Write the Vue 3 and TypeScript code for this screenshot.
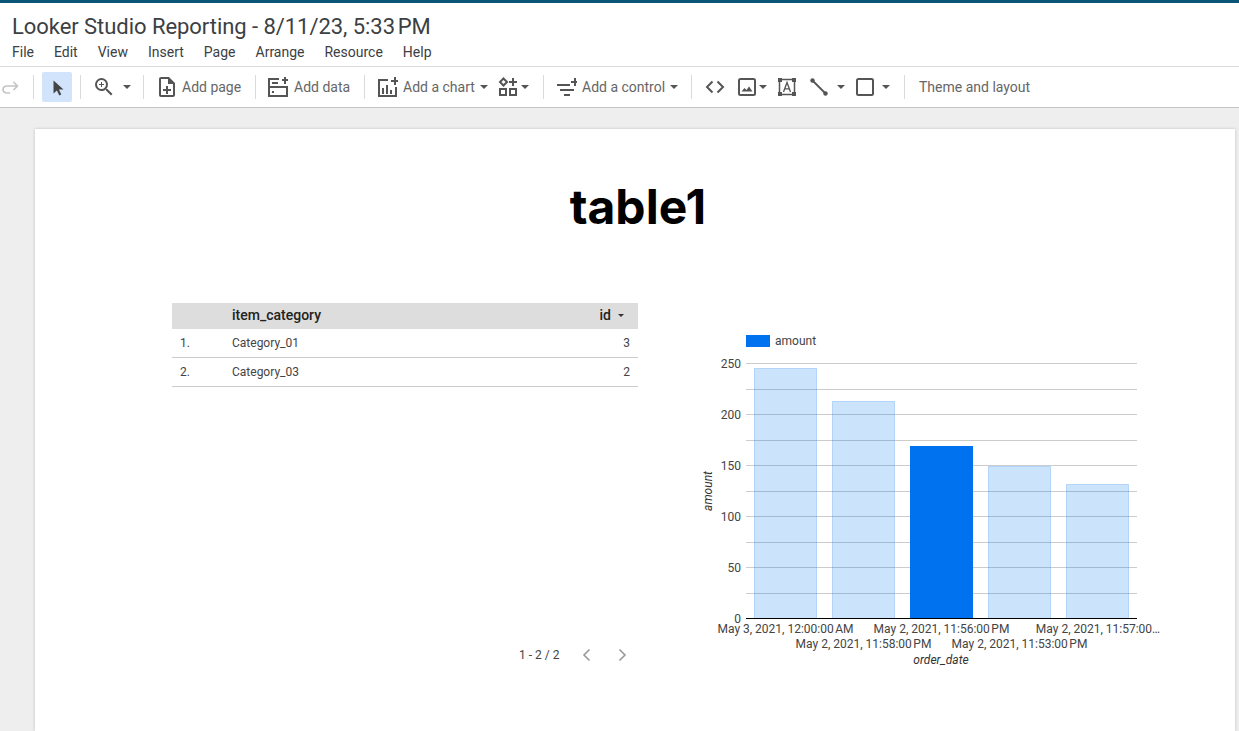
<template>
  <div class="app">
    <div class="accent"></div>
    <header class="head">
      <div class="doc-title">Looker Studio Reporting - 8/11/23, 5:33&#8239;PM</div>
      <nav class="menu">
        <span v-for="m in menus" :key="m" class="menu-item">{{ m }}</span>
      </nav>
    </header>

    <div class="toolbar">
      <div class="group g-redo">
        <svg class="ico redo" viewBox="0 0 18 14" width="18" height="14"><path d="M16 6H6.5C3.8 6 2 7.6 2 9.6S3.8 13 6.5 13H9M12.5 2 16.5 6l-4 4" fill="none" stroke="#c4c4c4" stroke-width="1.7"/></svg>
      </div>
      <div class="group g-select">
        <div class="select-btn">
          <svg viewBox="0 0 24 24" width="24" height="24"><path d="M8.5 5.5v13l3.4-3 2.4 5 2-1-2.4-4.9h4.6z" fill="#444"/></svg>
        </div>
      </div>
      <div class="group g-zoom">
        <svg viewBox="2 2 20 20" width="20" height="20"><path fill="#555" d="M15.5 14h-.79l-.28-.27A6.47 6.47 0 0 0 16 9.5 6.5 6.5 0 1 0 9.5 16c1.61 0 3.09-.59 4.23-1.57l.27.28v.79l5 4.99L20.49 19l-4.99-5zm-6 0C7.01 14 5 11.99 5 9.5S7.01 5 9.5 5 14 7.01 14 9.5 11.99 14 9.5 14zM12 10h-2v2H9v-2H7V9h2V7h1v2h2v1z"/></svg>
        <span class="caret caret-zoom"></span>
      </div>
      <div class="group g-page">
        <svg viewBox="0 0 24 24" width="24" height="24"><path fill="#555" d="M14 2H6c-1.1 0-1.99.9-1.99 2L4 20c0 1.1.89 2 1.99 2H18c1.1 0 2-.9 2-2V8l-6-6zm4 18H6V4h7v5h5v11zM13 11h-2v3H8v2h3v3h2v-3h3v-2h-3z"/></svg>
        <span class="label">Add page</span>
      </div>
      <div class="group g-data">
        <svg viewBox="0 0 20 20" width="20" height="20"><path fill="none" stroke="#555" stroke-width="2" d="M11 2H1v17h18V10H1"/><path fill="#555" d="M4 5h6v2H4zM4 14h2v2H4zM14 2h2V0h2v2h2v2h-2v3h-2V4h-2z"/></svg>
        <span class="label">Add data</span>
      </div>
      <div class="group g-chart">
        <svg viewBox="0 0 20 20" width="20" height="20"><path fill="none" stroke="#555" stroke-width="2" d="M10 3H1v16h17V10"/><path fill="#555" d="M4 11h2v6H4zM8 8h2v9H8zM12 13h2v4h-2zM13 3h3V0h2v3h2v2h-2v3h-2V5h-3z"/></svg>
        <span class="label">Add a chart</span>
        <span class="caret caret-chart"></span>
        <svg class="comm" viewBox="0 0 20 20" width="20" height="20"><path fill="none" stroke="#555" stroke-width="2" d="M5.500 1.500 9 5 5.500 8.500 2 5zM2 12h6v6H2zM12 12h6v6h-6z"/><path fill="#555" d="M14 1h2v3h3v2h-3v3h-2V6h-3V4h3z"/></svg>
        <span class="caret caret-comm"></span>
      </div>
      <div class="group g-control">
        <svg viewBox="0 0 20 18" width="20" height="18"><path fill="#555" d="M0 6h13v2H0zM3 11h14v2H3zM7 16h6v2H7zM14 3h3V0h2v3h1v2h-1v3h-2V5h-3z"/></svg>
        <span class="label">Add a control</span>
        <span class="caret caret-control"></span>
      </div>
      <div class="group g-insert">
        <svg class="code" viewBox="0 0 20 14" width="20" height="14"><path d="M7.500 1.500 2 7l5.500 5.500M12.500 1.500 18 7l-5.500 5.500" fill="none" stroke="#555" stroke-width="2"/></svg>
        <svg class="image" viewBox="0 0 18 18" width="18" height="18"><rect x="1" y="1" width="16" height="16" rx="1.500" fill="none" stroke="#555" stroke-width="2"/><path fill="#555" d="M3.500 13.500 6.500 10l2 2 2.500-3.500 3.500 5z"/></svg>
        <span class="caret caret-image"></span>
        <svg class="frame" viewBox="0 0 18 18" width="18" height="18"><path fill="none" stroke="#555" stroke-width="1.500" d="M2 1.500h14M2 16.500h14M1.500 2v14M16.500 2v14"/><path fill="#555" d="M0 0h4v4H0zM14 0h4v4h-4zM0 14h4v4H0zM14 14h4v4h-4z"/><path fill="none" stroke="#555" stroke-width="1.300" d="M5.500 14 9 4.500 12.500 14M6.800 10.800h4.400"/></svg>
        <svg class="line" viewBox="0 0 18 18" width="18" height="18"><path stroke="#555" stroke-width="1.800" d="M3 3l12 12"/><circle cx="2.500" cy="2.500" r="2.200" fill="#555"/><circle cx="15.500" cy="15.500" r="2.200" fill="#555"/></svg>
        <span class="caret caret-line"></span>
        <svg class="rect" viewBox="0 0 18 18" width="18" height="18"><rect x="1" y="1" width="16" height="16" rx="1.500" fill="none" stroke="#555" stroke-width="2"/></svg>
        <span class="caret caret-rect"></span>
      </div>
      <div class="group g-theme">
        <span class="label">Theme and layout</span>
      </div>
    </div>

    <main class="canvas">
      <section class="page">
        <h1 class="page-title">table1</h1>
        <div class="widgets">
          <div class="table-widget">
            <div class="t-row t-head">
              <span class="c-num"></span>
              <span class="c-name">item_category</span>
              <span class="c-val">id<i class="sort"></i></span>
            </div>
            <div v-for="(row, i) in rows" :key="row.name" class="t-row">
              <span class="c-num">{{ i + 1 }}.</span>
              <span class="c-name">{{ row.name }}</span>
              <span class="c-val">{{ row.id }}</span>
            </div>
            <div class="pager">
              <span>1 - 2 / 2</span>
              <svg viewBox="0 0 10 14" width="10" height="14"><path d="M8.500 1.500 3 7l5.500 5.500" fill="none" stroke="#999" stroke-width="1.600"/></svg>
              <svg viewBox="0 0 10 14" width="10" height="14"><path d="M1.500 1.500 7 7l-5.500 5.500" fill="none" stroke="#999" stroke-width="1.600"/></svg>
            </div>
          </div>

          <svg class="chart" viewBox="700 325 470 360" width="470" height="360">
            <rect x="746" y="335" width="24" height="12" fill="#0072f0"/>
            <text x="775" y="345" class="tick">amount</text>
            <line v-for="g in grid" :key="g.y" x1="746" x2="1137" :y1="g.y" :y2="g.y" stroke="#ccc"/>
            <text v-for="g in grid.filter(t => t.label)" :key="g.label" x="741" :y="g.y + 4" text-anchor="end" class="tick">{{ g.label }}</text>
            <template v-for="(b, i) in bars" :key="b.x">
              <rect
                :x="b.x + 0.5"
                :y="b.top + 0.5"
                width="62"
                :height="618 - b.top"
                :fill="i === 2 ? '#0072f0' : 'rgba(0,114,240,0.2)'"
                :stroke="i === 2 ? '#0072f0' : 'rgba(0,114,240,0.22)'"
              />
            </template>
            <line x1="746" x2="1137" y1="618.500" y2="618.500" stroke="#000"/>
            <text v-for="l in xLabels" :key="l.text" :x="l.x" :y="l.y" text-anchor="middle" class="tick">{{ l.text }}</text>
            <text x="941" y="664" text-anchor="middle" class="axis">order_date</text>
            <text x="712" y="491" text-anchor="middle" class="axis" transform="rotate(-90 712 491)">amount</text>
          </svg>
        </div>
      </section>
    </main>
  </div>
</template>

<script setup lang="ts">
const menus = ['File', 'Edit', 'View', 'Insert', 'Page', 'Arrange', 'Resource', 'Help']

const rows = [
  { name: 'Category_01', id: 3 },
  { name: 'Category_03', id: 2 },
]

const grid = [
  { y: 363.5, label: '250' },
  { y: 389.5, label: '' },
  { y: 414.5, label: '200' },
  { y: 440.5, label: '' },
  { y: 465.5, label: '150' },
  { y: 491.5, label: '' },
  { y: 516.5, label: '100' },
  { y: 542.5, label: '' },
  { y: 567.5, label: '50' },
  { y: 593.5, label: '' },
  { y: 618.5, label: '0' },
]

const bars = [
  { x: 754, top: 368 },
  { x: 832, top: 401 },
  { x: 910, top: 446 },
  { x: 988, top: 466 },
  { x: 1066, top: 484 },
]

const xLabels = [
  { text: 'May 3, 2021, 12:00:00\u202fAM', x: 785.5, y: 633 },
  { text: 'May 2, 2021, 11:56:00\u202fPM', x: 941.5, y: 633 },
  { text: 'May 2, 2021, 11:57:00…', x: 1098, y: 633 },
  { text: 'May 2, 2021, 11:58:00\u202fPM', x: 863.5, y: 648 },
  { text: 'May 2, 2021, 11:53:00\u202fPM', x: 1019.5, y: 648 },
]
</script>

<style>
html,
body {
  margin: 0;
  height: 100%;
  overflow: hidden;
}
</style>

<style scoped>
.app {
  height: 731px;
  display: flex;
  flex-direction: column;
  overflow: hidden;
  font-family: Roboto, "Liberation Sans", sans-serif;
  background: #fff;
}

.accent {
  height: 3px;
  background: #0b5676;
}

.head {
  height: 64px;
  box-sizing: border-box;
  border-bottom: 1px solid #dadada;
  padding: 11px 0 0 12px;
}

.doc-title {
  font-size: 22px;
  line-height: 26px;
  letter-spacing: -0.05px;
  color: #3c4043;
}

.menu {
  display: flex;
  gap: 20px;
  margin-top: 3px;
  font-size: 14px;
  line-height: 18px;
  color: #3c4043;
}

.toolbar {
  height: 41px;
  box-sizing: border-box;
  border-bottom: 1px solid #c4c4c4;
  display: flex;
  align-items: center;
  font-size: 14px;
  color: #666;
}

.group {
  display: flex;
  align-items: center;
  height: 24px;
  box-sizing: border-box;
  border-right: 1px solid #dadada;
  flex: none;
}

.g-redo { width: 34px; padding-left: 1px; }
.g-select { width: 47px; padding-left: 8px; }
.g-zoom { width: 63px; padding-left: 13px; }
.g-page { width: 112px; padding-left: 11px; gap: 3px; }
.g-data { width: 109px; padding-left: 12px; gap: 6px; }
.g-chart { width: 179px; padding-left: 13px; gap: 5px; }
.g-control { width: 148px; padding-left: 13px; gap: 5px; }
.g-insert { width: 213px; padding-left: 13px; }
.g-theme { border-right: 0; padding-left: 14px; }

.select-btn {
  width: 30px;
  height: 30px;
  background: #d2e3fc;
  border-radius: 2px;
  display: flex;
  align-items: center;
  justify-content: center;
}

.caret {
  width: 0;
  height: 0;
  border-left: 4px solid transparent;
  border-right: 4px solid transparent;
  border-top: 4px solid #555;
  flex: none;
}

.caret-zoom { margin-left: 9px; }
.comm { margin-left: 5px; }
.caret-comm { margin-left: -2px; }
.image { margin-left: 13px; }
.caret-image { margin-left: 3px; }
.frame { margin-left: 11px; }
.line { margin-left: 14px; }
.caret-line { margin-left: 9px; }
.rect { margin-left: 11px; }
.caret-rect { margin-left: 8px; }

.canvas {
  flex: 1;
  min-height: 0;
  background: #eee;
  padding: 21px 4px 0 35px;
}

.page {
  height: 100%;
  background: #fff;
  box-shadow: 0 0 3px rgba(0, 0, 0, 0.2);
  padding: 0 0 0 137px;
  box-sizing: border-box;
}

.page-title {
  margin: 0;
  height: 174px;
  box-sizing: border-box;
  padding: 48px 131px 0 0;
  text-align: center;
  font-family: Inter, Roboto, sans-serif;
  font-size: 48px;
  line-height: 60px;
  font-weight: 700;
  color: #000;
}

.widgets {
  display: flex;
  align-items: flex-start;
}

.table-widget {
  width: 466px;
  flex: none;
  font-size: 12px;
  color: #444;
}

.t-row {
  height: 29px;
  box-sizing: border-box;
  border-bottom: 1px solid #ccc;
  display: flex;
  align-items: center;
}

.t-head {
  height: 26px;
  padding-bottom: 2px;
  background: #ddd;
  border-bottom: 0;
  font-size: 14px;
  font-weight: 500;
  color: #222;
}

.c-num {
  width: 60px;
  padding-left: 8px;
  box-sizing: border-box;
}

.c-name {
  flex: 1;
}

.c-val {
  padding-right: 8px;
  display: flex;
  align-items: center;
}

.t-head .c-val {
  padding-right: 14px;
}

.sort {
  width: 0;
  height: 0;
  margin: 1px 0 0 7px;
  border-left: 3px solid transparent;
  border-right: 3px solid transparent;
  border-top: 3px solid #333;
}

.pager {
  margin-top: 258px;
  padding-left: 347px;
  display: flex;
  align-items: center;
  gap: 22px;
  height: 20px;
}

.pager svg + svg {
  margin-left: 5px;
}

.chart {
  flex: none;
  margin: 22px 0 0 62px;
}

.tick {
  font-family: Roboto, sans-serif;
  font-size: 12px;
  fill: #444;
}

.axis {
  font-family: Roboto, sans-serif;
  font-size: 12px;
  font-style: italic;
  fill: #333;
}
</style>
